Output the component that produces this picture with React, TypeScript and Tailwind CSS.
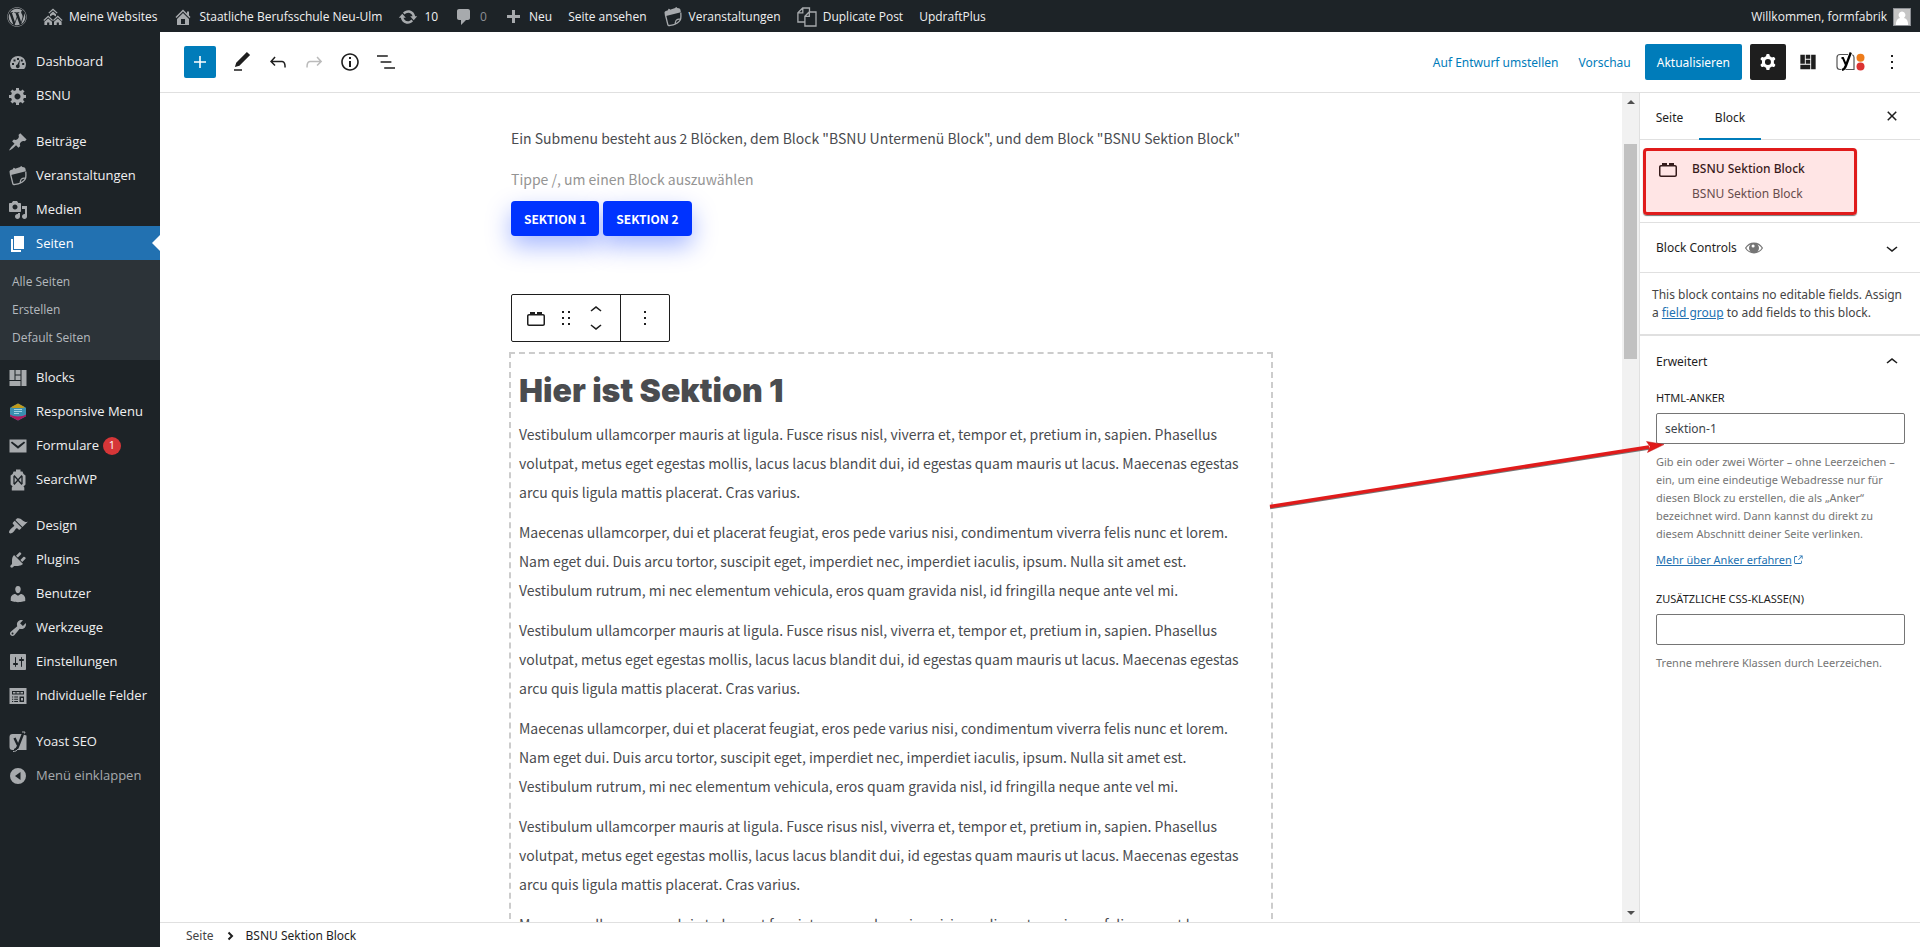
import type { ReactNode } from "react";
import { FaWordpress } from "react-icons/fa";

type IconProps = { d: string; box?: number; className?: string };

function Icon({ d, box = 20, className = "size-5" }: IconProps) {
  return (
    <svg viewBox={`0 0 ${box} ${box}`} className={`${className} shrink-0`} fill="currentColor" fillRule="evenodd" aria-hidden="true">
      <path d={d} />
    </svg>
  );
}

const dash = {
  home: "M16 8.5l1.53 1.53-1.06 1.06L10 4.6l-6.47 6.49-1.06-1.06L10 2.5l4 4v-2h2v4zm-6-2.46l6 5.99V18H4v-5.97zM12 17v-5H8v5h4z",
  update:
    "M10.2 3.28c3.53 0 6.43 2.61 6.92 6h2.08l-3.5 4-3.5-4h2.32c-.45-1.97-2.21-3.45-4.32-3.45-1.45 0-2.73.71-3.54 1.78L4.95 5.66C6.23 4.2 8.11 3.28 10.2 3.28zm-.4 13.44c-3.52 0-6.43-2.61-6.92-6H.8l3.5-4c1.17 1.33 2.33 2.67 3.5 4H5.48c.45 1.97 2.21 3.45 4.32 3.45 1.45 0 2.73-.71 3.54-1.78l1.71 1.95c-1.28 1.46-3.15 2.38-5.25 2.38z",
  comment: "M5 2h9c1.1 0 2 .9 2 2v7c0 1.1-.9 2-2 2h-2l-5 5v-5H5c-1.1 0-2-.9-2-2V4c0-1.1.9-2 2-2z",
  plus: "M17 8v3h-5v5H9v-5H4V8h5V3h3v5h5z",
  page: "M6 15V2h10v13H6zm-1 1h8v2H3V5h2v11z",
  generic:
    "M18 12h-2.18c-.17.7-.44 1.35-.81 1.93l1.54 1.54-2.1 2.1-1.54-1.54c-.58.36-1.23.63-1.91.79V19H8v-2.18c-.68-.16-1.33-.43-1.91-.79l-1.54 1.54-2.12-2.12 1.54-1.54c-.36-.58-.63-1.23-.79-1.91H1V9.03h2.17c.16-.7.44-1.35.8-1.94L2.43 5.55l2.1-2.1 1.54 1.54c.58-.37 1.24-.64 1.93-.81V2h3v2.18c.68.16 1.33.43 1.91.79l1.54-1.54 2.12 2.12-1.54 1.54c.36.59.64 1.24.8 1.94H18V12zm-8.5 1.5c1.66 0 3-1.34 3-3s-1.34-3-3-3-3 1.34-3 3 1.34 3 3 3z",
  post: "M10.44 3.02l1.82-1.82 6.36 6.35-1.83 1.82c-1.05-.68-2.48-.57-3.41.36l-.75.75c-.92.93-1.04 2.35-.35 3.41l-1.83 1.82-2.41-2.41-2.8 2.79c-.42.42-3.38 2.71-3.8 2.29s1.86-3.39 2.28-3.81l2.79-2.79L4.1 9.36l1.83-1.82c1.05.69 2.48.57 3.4-.36l.75-.75c.93-.92 1.05-2.35.36-3.41z",
  media:
    "M13 11V4c0-.55-.45-1-1-1h-1.67L9 1H5L3.67 3H2c-.55 0-1 .45-1 1v7c0 .55.45 1 1 1h10c.55 0 1-.45 1-1zM7 4.5c1.38 0 2.5 1.12 2.5 2.5S8.38 9.5 7 9.5 4.5 8.38 4.5 7 5.62 4.5 7 4.5zM14 6h5v10.5c0 1.38-1.12 2.5-2.5 2.5S14 17.88 14 16.5s1.12-2.5 2.5-2.5c.17 0 .34.02.5.05V9h-3V6zm-4 8.05V13h2v3.5c0 1.38-1.12 2.5-2.5 2.5S7 17.88 7 16.5 8.12 14 9.5 14c.17 0 .34.02.5.05z",
  appearance:
    "M14.48 11.06L7.41 3.99l1.5-1.5c.5-.56 2.3-.47 3.51.32 1.21.8 1.43 1.28 2.91 2.1 1.18.64 2.45 1.26 4.45.85zm-.71.71L6.7 4.7 4.93 6.47c-.39.39-.39 1.02 0 1.41l1.06 1.06c.39.39.39 1.03 0 1.42-.6.6-1.43 1.11-2.21 1.69-.35.26-.7.53-1.01.84C1.43 14.23.4 16.08 1.4 17.07c.99 1 2.84-.03 4.18-1.36.31-.31.58-.66.85-1.02.57-.78 1.08-1.61 1.69-2.21.39-.39 1.02-.39 1.41 0l1.06 1.06c.39.39 1.02.39 1.41 0z",
  plugins:
    "M13.11 4.36L9.87 7.6 8 5.73l3.24-3.24c.35-.34 1.05-.2 1.56.32.52.51.66 1.21.31 1.55zm-8 1.77l.91-1.12 9.01 9.01-1.19.84c-.71.71-2.63 1.16-3.82 1.16H6.14L4.9 17.26c-.59.59-1.54.59-2.12 0-.59-.58-.59-1.53 0-2.12l1.24-1.24v-3.88c0-1.13.4-3.19 1.09-3.89zm7.26 3.97l3.24-3.24c.34-.35 1.04-.21 1.55.31.52.51.66 1.21.31 1.55l-3.24 3.25z",
  users:
    "M10 9.25c-2.27 0-2.73-3.44-2.73-3.44C7 4.02 7.82 2 9.97 2c2.16 0 2.98 2.02 2.71 3.81 0 0-.41 3.44-2.68 3.44zm0 2.57L12.72 10c2.39 0 4.52 2.33 4.52 4.53v2.49s-3.65 1.13-7.24 1.13c-3.65 0-7.24-1.13-7.24-1.13v-2.49c0-2.25 1.94-4.48 4.47-4.48z",
  tools:
    "M16.68 9.77c-1.34 1.34-3.3 1.67-4.95.99l-5.41 6.52c-.99.99-2.59.99-3.58 0s-.99-2.59 0-3.57l6.52-5.42c-.68-1.65-.35-3.61.99-4.95 1.28-1.28 3.12-1.62 4.72-1.06l-2.89 2.89 2.82 2.82 2.86-2.87c.53 1.58.18 3.39-1.08 4.65zM3.81 16.21c.4.39 1.04.39 1.43 0 .4-.4.4-1.04 0-1.43-.39-.4-1.03-.4-1.43 0-.39.39-.39 1.03 0 1.43z",
  settings:
    "M18 17V3c0-.55-.45-1-1-1H3c-.55 0-1 .45-1 1v14c0 .55.45 1 1 1h14c.55 0 1-.45 1-1zM8 11h1c.55 0 1 .45 1 1s-.45 1-1 1H8v1.5c0 .28-.22.5-.5.5s-.5-.22-.5-.5V13H6c-.55 0-1-.45-1-1s.45-1 1-1h1V5.5c0-.28.22-.5.5-.5s.5.22.5.5V11zm5-2h-1c-.55 0-1-.45-1-1s.45-1 1-1h1V5.5c0-.28.22-.5.5-.5s.5.22.5.5V7h1c.55 0 1 .45 1 1s-.45 1-1 1h-1v5.5c0 .28-.22.5-.5.5s-.5-.22-.5-.5V9z",
  dashboard:
    "M3.8 17h12.4A8 8 0 1 0 3.8 17zM9 6h2v2H9zM5.5 7.5h2v2h-2zM12.8 7.5h2v2h-2zM4 11h2v2H4zM14.2 11h2v2h-2zM11.9 7.6l-.6 5.4c.3.4.4.8.4 1.2a1.9 1.9 0 1 1-2.3-1.8z",
  blocks: "M1.5 2h5v10h-5zM7.5 2h5v4.5h-5zM7.5 7.5h5V12h-5zM13.5 2h5v16h-5zM1.5 13h11v5h-11z",
  mail: "M1.5 3.5h17v13h-17zM4 5.5l-1.2 1.2L10 12.8l7.2-6.1L16 5.5l-6 4.6z",
  fields:
    "M1.5 2h17v16h-17zM4 5v3.5h12V5zM5 6h2.5v1.5H5zM8.5 6h3v1.5h-3zM12.5 6H15v1.5h-2.5zM4 10.5h1.2v1H4zM6.2 10.5H10v1H6.2zM4 12.7h1.2v1H4zM6.2 12.7H10v1H6.2zM4 14.9h1.2v1H4zM6.2 14.9H10v1H6.2zM11.5 10.5H16V16h-4.500zM13 12v2.500h2V12z",
  collapse: "M10 2a8 8 0 1 1 0 16 8 8 0 0 1 0-16zM12.500 6v8L7 10z",
  eye: "M10 3.900c4 0 7.700 2.100 9.700 5.500l.3.600-.3.600c-2 3.400-5.700 5.500-9.700 5.500S2.300 14 .3 10.600L0 10l.3-.6C2.300 6 6 3.900 10 3.900zM1.500 10c1 1.800 2.700 3.200 4.600 4A5.600 5.600 0 0 1 6.100 6c-1.900.8-3.600 2.200-4.600 4zM18.500 10c-1-1.800-2.700-3.200-4.600-4a5.600 5.600 0 0 1 0 8c1.900-.8 3.600-2.200 4.600-4zM9 6a1.700 1.700 0 1 0 0 3.400A1.700 1.700 0 0 0 9 6z",
};

const wp = {
  plus: "M18 11.2h-5.2V6h-1.6v5.2H6v1.6h5.2V18h1.6v-5.200H18z",
  edit: "M20.1 5.1L16.900 2 6.200 12.700l-1.300 4.400 4.500-1.300L20.100 5.100zM4 20.800h8v-1.500H4v1.500z",
  undo: "M18.3 11.7c-.6-.6-1.4-.9-2.3-.9H6.7l2.9-3.3-1.1-1-4.5 5L8.5 16l1-1-2.7-2.7H16c.5 0 .9.2 1.3.5 1 1 1 3.4 1 4.5v.3h1.5v-.2c0-1.500 0-4.300-1.500-5.700z",
  redo: "M15.6 6.5l-1.1 1 2.9 3.3H8c-.9 0-1.7.3-2.3.9-1.4 1.5-1.4 4.2-1.4 5.6v.2h1.5v-.3c0-1.1 0-3.5 1-4.5.3-.3.7-.5 1.3-.5h9.2L14.500 15l1.100 1.100 4.600-4.600-4.600-5z",
  info: "M12 3.200c-4.800 0-8.800 3.900-8.800 8.800 0 4.800 3.900 8.800 8.800 8.800 4.800 0 8.800-3.900 8.800-8.800 0-4.800-4-8.800-8.800-8.800zm0 16c-4 0-7.200-3.300-7.200-7.200C4.800 8 8 4.800 12 4.800s7.200 3.300 7.200 7.200c0 4-3.200 7.200-7.200 7.200zM11 17h2v-6h-2v6zm0-8h2V7h-2v2z",
  list: "M13.800 5.200H3v1.500h10.800V5.200zm-3.600 12v1.500H21v-1.500H10.200zm7.200-6H6.600v1.500h10.800v-1.500z",
  block:
    "M19 8h-1V6h-5v2h-2V6H6v2H5c-1.100 0-2 .9-2 2v8c0 1.100.9 2 2 2h14c1.100 0 2-.9 2-2v-8c0-1.100-.9-2-2-2zm.5 10c0 .3-.2.5-.5.500H5c-.3 0-.5-.2-.5-.500v-8c0-.3.2-.5.5-.5h14c.3 0 .5.200.5.500v8z",
  drag: "M5 4h2V2H5v2zm6-2v2h2V2h-2zm-6 8h2V8H5v2zm6 0h2V8h-2v2zm-6 6h2v-2H5v2zm6 0h2v-2h-2v2z",
  down: "M17.500 11.600L12 16l-5.500-4.400.9-1.200L12 14l4.500-3.600 1 1.200z",
  up: "M6.500 12.400L12 8l5.500 4.400-.9 1.200L12 10l-4.500 3.600-1-1.200z",
  more: "M13 19h-2v-2h2v2zm0-6h-2v-2h2v2zm0-6h-2V5h2v2z",
  close:
    "M12 13.060l3.712 3.713 1.061-1.060L13.061 12l3.712-3.712-1.060-1.060L12 10.938 8.288 7.227l-1.061 1.060L10.939 12l-3.712 3.712 1.060 1.061L12 13.061z",
  cog: "M10.289 4.836A1 1 0 0111.275 4h1.306a1 1 0 01.987.836l.244 1.466c.787.26 1.503.679 2.108 1.218l1.393-.522a1 1 0 011.216.437l.653 1.13a1 1 0 01-.23 1.273l-1.148.944a6.025 6.025 0 010 2.435l1.149.946a1 1 0 01.23 1.272l-.653 1.13a1 1 0 01-1.216.437l-1.394-.522c-.605.54-1.32.958-2.108 1.218l-.244 1.466a1 1 0 01-.987.836h-1.306a1 1 0 01-.986-.836l-.244-1.466a5.995 5.995 0 01-2.108-1.218l-1.394.522a1 1 0 01-1.217-.436l-.653-1.131a1 1 0 01.23-1.272l1.149-.946a6.026 6.026 0 010-2.435l-1.148-.944a1 1 0 01-.23-1.272l.653-1.131a1 1 0 011.217-.437l1.393.522a5.994 5.994 0 012.108-1.218l.244-1.466zM14.929 12a3 3 0 11-6 0 3 3 0 016 0z",
  external:
    "M18.200 17c0 .7-.6 1.200-1.200 1.200H7c-.7 0-1.200-.6-1.200-1.200V7c0-.7.6-1.200 1.200-1.200h3.200V4.200H7C5.500 4.200 4.200 5.500 4.200 7v10c0 1.500 1.200 2.800 2.800 2.800h10c1.500 0 2.800-1.200 2.800-2.800v-3.600h-1.500V17zM14.900 3v1.500h3.700l-6.400 6.400 1.100 1.100 6.400-6.400v3.700h1.500V3h-6.300z",
};

function SitesIcon() {
  return (
    <svg viewBox="0 0 20 20" className="size-5 shrink-0" fill="currentColor" fillRule="evenodd" aria-hidden="true">
      <path d="M10 1.500l4.600 4.300-.8.800L10 3.200 6.200 6.600l-.8-.8zM10 4.500l3 2.700V9.500L10 7.700 7 9.500V7.200zM5.200 8.600l4.800 4.400-.8.900-4-3.700-4 3.700-.8-.9zM14.800 8.600l4.800 4.400-.8.900-4-3.700-4 3.700-.8-.9zM5.200 11.500l3.800 3.300V18H6.300v-2.500H4.100V18H1.400v-3.200zM14.800 11.500l3.800 3.300V18h-2.700v-2.500h-2.200V18H11v-3.200z" />
    </svg>
  );
}

function EventsIcon() {
  return (
    <svg viewBox="0 0 20 20" className="size-5 shrink-0" aria-hidden="true">
      <path d="M1.500 5.800c0-1 .5-1.600 1.400-1.900l2-.6L5.500 1.700l1.200.2.300.8 5.200-1.600.8-1 1 .4.200.6 1.600.2c.9.200 1.500.8 1.700 1.700l.4 2.200L2 9.300z" fill="currentColor" />
      <path d="M2.600 8.500l2.200 9c.2.900.8 1.200 1.700 1 2-.3 4-.5 5.500-1.300 2.600-1.400 5.200-3.300 5.700-5.400.2-1.500.3-4 .1-6.200M12 17.200c.5-1.700.3-3.600 1.800-4.400 1-.5 2.500-.6 3.900-1" fill="none" stroke="currentColor" strokeWidth="1.300" />
    </svg>
  );
}

function DuplicateIcon() {
  return (
    <svg viewBox="0 0 20 20" className="size-5 shrink-0" fill="none" stroke="currentColor" strokeWidth="1.300" aria-hidden="true">
      <path d="M7.500 15H.9V5.800L5.700 1h6.800v3.500M.9 5.900h4.900V1M7.900 9.300l4.300-4.300H19v14H7.900zM7.900 9.400h4.400V5" />
    </svg>
  );
}

function ResponsiveIcon() {
  return (
    <svg viewBox="0 0 20 20" className="size-5 shrink-0" aria-hidden="true">
      <path d="M10 1.500l8 4.200v8.600l-8 4.200-8-4.200V5.700z" fill="#3a8fb0" />
      <path d="M10 1.500l7 3.700c-2 1.200-12 1.200-14 0z" fill="#c19a1b" />
      <path d="M2 12.500c3 2.600 13 2.600 16 0v1.800l-8 4.200-8-4.200z" fill="#b0195c" />
      <path d="M6 7.500h8M6 9.500h8M6 11.500h5" stroke="#9fd0e2" strokeWidth="1" />
    </svg>
  );
}

function LanternIcon() {
  return (
    <svg viewBox="0 0 20 24" className="h-6 w-5 shrink-0" aria-hidden="true">
      <path d="M8 1.500h4.500v2h2l1 2.500 2 1.500v9l-2 2 .8 1v3H3.800v-3l.8-1-2-2v-9l2-1.500 1-2.500H8z" fill="currentColor" />
      <path d="M6 7.500l8 9M14 7.500l-8 9M6 8v8M14 8v8" fill="none" stroke="#1d2327" strokeWidth="1.300" />
    </svg>
  );
}

function YoastMenuIcon() {
  return (
    <svg viewBox="0 0 20 22" className="h-[22px] w-5 shrink-0" aria-hidden="true">
      <path d="M4.500 3H16v.8L18.500 4.500V19H4.500a3 3 0 0 1-3-3V6a3 3 0 0 1 3-3z" fill="currentColor" />
      <path d="M6.500 7l3.300 7M15.500 1.500L10 15.500c-.8 2.300-2 3.500-4 3.600" fill="none" stroke="#1d2327" strokeWidth="2.400" />
      <path d="M14 1h3l-.5 1.500M5 20.500c2.500 0 3.800-.7 5-2.500" fill="none" stroke="currentColor" strokeWidth="1" />
    </svg>
  );
}

function YoastHeaderIcon() {
  return (
    <svg viewBox="0 0 30 22" className="h-[22px] w-[30px]" aria-hidden="true">
      <path d="M13 3.500H5a3 3 0 0 0-3 3v9a3 3 0 0 0 3 3h1.500M10.500 18.500H19v-12a3 3 0 0 0-1.700-2.700" fill="none" stroke="#555" strokeWidth="1.200" />
      <path d="M6.500 7h1.500l3 7" fill="none" stroke="#000" strokeWidth="2" />
      <path d="M15.800 1.500L11 14.500c-.8 2.300-1.800 4-4 4.300" fill="none" stroke="#000" strokeWidth="2.300" />
      <circle cx="25.500" cy="6.800" r="4" fill="#ee7c1b" />
      <circle cx="25.500" cy="15.500" r="4" fill="#dc3232" />
    </svg>
  );
}

type Item = { label: string; icon: ReactNode; badge?: string };

const firstItems: Item[] = [
  { label: "Dashboard", icon: <Icon d={dash.dashboard} /> },
  { label: "BSNU", icon: <Icon d={dash.generic} /> },
];
const contentItems: Item[] = [
  { label: "Beiträge", icon: <Icon d={dash.post} /> },
  { label: "Veranstaltungen", icon: <EventsIcon /> },
  { label: "Medien", icon: <Icon d={dash.media} /> },
];
const pluginItems: Item[] = [
  { label: "Blocks", icon: <Icon d={dash.blocks} /> },
  { label: "Responsive Menu", icon: <ResponsiveIcon /> },
  { label: "Formulare", icon: <Icon d={dash.mail} />, badge: "1" },
  { label: "SearchWP", icon: <LanternIcon /> },
];
const adminItems: Item[] = [
  { label: "Design", icon: <Icon d={dash.appearance} /> },
  { label: "Plugins", icon: <Icon d={dash.plugins} /> },
  { label: "Benutzer", icon: <Icon d={dash.users} /> },
  { label: "Werkzeuge", icon: <Icon d={dash.tools} /> },
  { label: "Einstellungen", icon: <Icon d={dash.settings} /> },
  { label: "Individuelle Felder", icon: <Icon d={dash.fields} /> },
];

function MenuGroup({ items }: { items: Item[] }) {
  return (
    <ul>
      {items.map((item) => (
        <li key={item.label}>
          <a href="#" className="flex h-[34px] items-center gap-2 pt-px pl-2 text-[13px] whitespace-nowrap text-[#f0f0f1]">
            <span className="text-[#a7aaad]">{item.icon}</span>
            {item.label}
            {item.badge && (
              <span className="-ml-1 flex size-[18px] items-center justify-center rounded-full bg-[#d63638] text-[11px] text-white">{item.badge}</span>
            )}
          </a>
        </li>
      ))}
    </ul>
  );
}

function AdminMenu() {
  return (
    <nav aria-label="Hauptmenü" className="flex w-40 shrink-0 flex-col gap-3 overflow-hidden bg-[#1d2327] pt-3">
      <MenuGroup items={firstItems} />
      <div>
        <MenuGroup items={contentItems} />
        <a href="#" className="relative flex h-[34px] items-center gap-2 bg-[#2271b1] pt-px pl-2 text-[13px] text-white">
          <Icon d={dash.page} />
          Seiten
          <span className="absolute top-[9px] right-0 border-8 border-l-0 border-transparent border-r-white" />
        </a>
        <ul className="flex flex-col bg-[#2c3338] pt-2 pb-2 text-xs text-[#b4b9be]">
          {["Alle Seiten", "Erstellen", "Default Seiten"].map((label) => (
            <li key={label}>
              <a href="#" className="flex h-7 items-center pl-3">
                {label}
              </a>
            </li>
          ))}
        </ul>
        <MenuGroup items={pluginItems} />
      </div>
      <MenuGroup items={adminItems} />
      <div>
        <MenuGroup items={[{ label: "Yoast SEO", icon: <YoastMenuIcon /> }]} />
        <button type="button" className="flex h-[34px] items-center gap-2 pt-px pl-2 text-[13px] text-[#a7aaad]">
          <Icon d={dash.collapse} />
          Menü einklappen
        </button>
      </div>
    </nav>
  );
}

function BarLink({ icon, children, dim = false }: { icon?: ReactNode; children?: ReactNode; dim?: boolean }) {
  return (
    <a href="#" className="flex h-8 items-center gap-[6px]">
      {icon && <span className="text-[#a7aaad]">{icon}</span>}
      {children && <span className={dim ? "text-[#8c8f94]" : ""}>{children}</span>}
    </a>
  );
}

function AdminBar() {
  return (
    <header className="flex h-8 shrink-0 items-center justify-between bg-[#1d2327] pt-px pr-[9px] pl-[7px] text-xs whitespace-nowrap text-[#f0f0f1]">
      <div className="flex items-center gap-4">
        <a href="#" aria-label="WordPress" className="text-[#a7aaad]">
          <FaWordpress className="size-5" />
        </a>
        <BarLink icon={<SitesIcon />}>Meine Websites</BarLink>
        <BarLink icon={<Icon d={dash.home} />}>Staatliche Berufsschule Neu-Ulm</BarLink>
        <BarLink icon={<Icon d={dash.update} />}>10</BarLink>
        <BarLink icon={<Icon d={dash.comment} />} dim>
          0
        </BarLink>
        <BarLink icon={<Icon d={dash.plus} />}>Neu</BarLink>
        <BarLink>Seite ansehen</BarLink>
        <BarLink icon={<EventsIcon />}>Veranstaltungen</BarLink>
        <BarLink icon={<DuplicateIcon />}>Duplicate Post</BarLink>
        <BarLink>UpdraftPlus</BarLink>
      </div>
      <a href="#" className="flex items-center gap-[6px]">
        Willkommen, formfabrik
        <svg viewBox="0 0 18 18" className="size-[18px]" aria-hidden="true">
          <path d="M0 0h18v18H0z" fill="#8c8f94" />
          <path d="M1 1h16v16H1z" fill="#c5c5c5" />
          <path d="M9 3.500a3.600 3.600 0 0 1 2 6.500c3 .8 4 3 4.200 7H2.800C3 13 4 10.800 7 10a3.600 3.600 0 0 1 2-6.500z" fill="#fff" />
        </svg>
      </a>
    </header>
  );
}

function ToolButton({ label, d, faded = false }: { label: string; d: string; faded?: boolean }) {
  return (
    <button type="button" aria-label={label} className={`flex size-9 items-center justify-center ${faded ? "text-[#bbb]" : "text-[#1e1e1e]"}`}>
      <Icon d={d} box={24} className="size-6" />
    </button>
  );
}

function EditorHeader() {
  return (
    <div className="flex h-[61px] shrink-0 items-center justify-between border-b border-[#e0e0e0] bg-white pr-[10px] pl-6 font-['Noto_Sans',sans-serif] text-xs">
      <div className="flex items-center">
        <button type="button" aria-label="Block hinzufügen" className="mr-2 flex size-8 items-center justify-center rounded-[2px] bg-[#007cba] text-white">
          <Icon d={wp.plus} box={24} className="size-6" />
        </button>
        <ToolButton label="Werkzeuge" d={wp.edit} />
        <ToolButton label="Rückgängig" d={wp.undo} />
        <ToolButton label="Wiederholen" d={wp.redo} faded />
        <ToolButton label="Details" d={wp.info} />
        <ToolButton label="Listenansicht" d={wp.list} />
      </div>
      <div className="flex items-center gap-1">
        <button type="button" className="h-9 px-2 pt-[2px] text-[#007cba]">
          Auf Entwurf umstellen
        </button>
        <button type="button" className="mr-[10px] ml-2 h-9 pt-[2px] text-[#007cba]">
          Vorschau
        </button>
        <button type="button" className="mr-1 h-9 rounded-[2px] bg-[#007cba] px-3 pt-[2px] text-white">
          Aktualisieren
        </button>
        <button type="button" aria-label="Einstellungen" className="flex size-9 items-center justify-center rounded-[2px] bg-[#1e1e1e] text-white">
          <Icon d={wp.cog} box={24} className="size-6" />
        </button>
        <button type="button" aria-label="Blocks" className="flex size-9 items-center justify-center text-[#1e1e1e]">
          <Icon d={dash.blocks} className="size-[18px]" />
        </button>
        <button type="button" aria-label="Yoast SEO" className="flex h-9 w-10 items-center justify-center">
          <YoastHeaderIcon />
        </button>
        <ToolButton label="Optionen" d={wp.more} />
      </div>
    </div>
  );
}

const vestibulum =
  "Vestibulum ullamcorper mauris at ligula. Fusce risus nisl, viverra et, tempor et, pretium in, sapien. Phasellus volutpat, metus eget egestas mollis, lacus lacus blandit dui, id egestas quam mauris ut lacus. Maecenas egestas arcu quis ligula mattis placerat. Cras varius.";
const maecenas =
  "Maecenas ullamcorper, dui et placerat feugiat, eros pede varius nisi, condimentum viverra felis nunc et lorem. Nam eget dui. Duis arcu tortor, suscipit eget, imperdiet nec, imperdiet iaculis, ipsum. Nulla sit amet est. Vestibulum rutrum, mi nec elementum vehicula, eros quam gravida nisl, id fringilla neque ante vel mi.";
const paragraphs = [vestibulum, maecenas, vestibulum, maecenas, vestibulum, maecenas];

function BlockToolbar() {
  return (
    <div role="toolbar" aria-label="Block-Werkzeuge" className="flex h-12 w-[159px] rounded-[2px] border border-[#1e1e1e] text-[#1e1e1e]">
      <div className="flex flex-1 items-center border-r border-[#1e1e1e] pl-3">
        <button type="button" aria-label="BSNU Sektion Block">
          <Icon d={wp.block} box={24} className="size-6" />
        </button>
        <button type="button" aria-label="Ziehen" className="ml-[9px]">
          <Icon d={wp.drag} box={18} className="size-[18px]" />
        </button>
        <div className="ml-[9px] flex flex-col">
          <button type="button" aria-label="Nach oben" className="flex h-4 items-center">
            <Icon d={wp.up} box={24} className="size-6" />
          </button>
          <button type="button" aria-label="Nach unten" className="flex h-4 items-center">
            <Icon d={wp.down} box={24} className="size-6" />
          </button>
        </div>
      </div>
      <button type="button" aria-label="Optionen" className="flex w-12 items-center justify-center">
        <Icon d={wp.more} box={24} className="size-6" />
      </button>
    </div>
  );
}

function Canvas() {
  return (
    <main className="min-w-0 flex-1 overflow-hidden bg-white font-['Noto_Sans_CJK_SC',sans-serif] text-sm leading-[29px] text-[#4a4c4f]">
      <div className="mx-auto max-w-[764px] pt-[31px]">
        <div className="pl-[2px]">
          <p>Ein Submenu besteht aus 2 Blöcken, dem Block "BSNU Untermenü Block", und dem Block "BSNU Sektion Block"</p>
          <p className="mt-3 text-[#949494]">Tippe /, um einen Block auszuwählen</p>
          <div className="mt-[7px] flex gap-1">
            {["SEKTION 1", "SEKTION 2"].map((label) => (
              <button
                key={label}
                type="button"
                className="h-[35px] rounded-[4px] bg-[#0033ff] px-[13px] text-xs font-bold text-white shadow-[0_10px_25px_rgba(0,51,255,0.35)]"
              >
                {label}
              </button>
            ))}
          </div>
          <div className="mt-[58px]">
            <BlockToolbar />
          </div>
        </div>
        <section className="mt-[10px] border-2 border-dashed border-[#cccccc] px-2 pt-4">
          <h2 className="font-['Inter',sans-serif] text-[32px] leading-[42px] font-black">Hier ist Sektion 1</h2>
          <div className="mt-2 flex flex-col gap-[11px] pr-3">
            {paragraphs.map((text, i) => (
              <p key={i}>{text}</p>
            ))}
          </div>
        </section>
      </div>
    </main>
  );
}

function Scrollbar() {
  return (
    <div aria-hidden="true" className="flex w-[17px] shrink-0 flex-col items-center justify-between bg-[#f1f1f1]">
      <div className="flex w-full flex-col items-center pt-[7px]">
        <span className="border-4 border-t-0 border-transparent border-b-[#505050]" />
        <span className="mt-10 h-[215px] w-[13px] bg-[#c1c1c1]" />
      </div>
      <span className="mb-[7px] border-4 border-b-0 border-transparent border-t-[#505050]" />
    </div>
  );
}

function PointerArrow() {
  return (
    <svg viewBox="0 0 396 70" className="pointer-events-none absolute top-7 -left-[387px] h-[70px] w-[396px]" aria-hidden="true">
      <path d="M1 66.500L380 7" stroke="#777" strokeWidth="3.500" />
      <path d="M1 65.500L380 6" stroke="#e01b1b" strokeWidth="3.500" />
      <path d="M395 3.500L377.500 .5 381 5.500 378.500 11.500z" fill="#e01b1b" stroke="#c01818" strokeWidth=".5" />
    </svg>
  );
}

function TextField({ id, label, value, children }: { id: string; label: string; value: string; children?: ReactNode }) {
  return (
    <div className="flex flex-col">
      <label htmlFor={id} className="text-[11px] leading-4 text-[#1e1e1e] uppercase">
        {label}
      </label>
      <div className="relative mt-[7px]">
        <input id={id} defaultValue={value} className="h-[31px] w-full rounded-[2px] border border-[#757575] bg-white px-2 text-xs text-[#3c434a]" />
        {children}
      </div>
    </div>
  );
}

function SettingsPanel() {
  return (
    <aside className="relative z-10 w-[281px] shrink-0 border-l border-[#e0e0e0] font-['Noto_Sans',sans-serif] text-xs text-[#1e1e1e]">
      <div className="flex h-[47px] items-stretch justify-between border-b border-[#e0e0e0] pr-[10px]">
        <div role="tablist" className="flex">
          <button type="button" role="tab" aria-selected="false" className="w-[59px] pt-1">
            Seite
          </button>
          <button type="button" role="tab" aria-selected="true" className="-mb-px w-[62px] border-b-2 border-[#007cba] pt-1">
            Block
          </button>
        </div>
        <div className="flex items-center">
          <ToolButton label="Schließen" d={wp.close} />
        </div>
      </div>
      <div className="relative flex h-[83px] gap-3 border-b border-[#e0e0e0] pt-[17px] pl-4">
        <Icon d={wp.block} box={24} className="size-6" />
        <div className="flex flex-col gap-[7px] pt-[3px] leading-[18px]">
          <h2 className="font-medium">BSNU Sektion Block</h2>
          <p className="text-[#555]">BSNU Sektion Block</p>
        </div>
        <span className="absolute top-2 left-[3px] h-[67px] w-[214px] rounded-[4px] border-3 border-[#e01b1b] bg-[#ff0000]/10 shadow-[0_1px_1px_#777]" />
      </div>
      <button type="button" className="flex h-[50px] w-full items-center border-b border-[#e0e0e0] px-4 pt-px">
        Block Controls
        <span className="ml-2 text-[#757575]">
          <Icon d={dash.eye} className="size-[18px]" />
        </span>
        <span className="ml-auto">
          <Icon d={wp.down} box={24} className="size-6" />
        </span>
      </button>
      <p className="border-b-2 border-[#e0e0e0] px-3 pt-[13px] pb-3 leading-[18px] text-[#444]">
        This block contains no editable fields. Assign a{" "}
        <a href="#" className="text-[#2271b1] underline">
          field group
        </a>{" "}
        to add fields to this block.
      </p>
      <button type="button" className="flex h-[52px] w-full items-center justify-between px-4">
        Erweitert
        <Icon d={wp.up} box={24} className="size-6" />
      </button>
      <div className="pt-[2px] pr-[15px] pl-4">
        <TextField id="html-anchor" label="HTML-Anker" value="sektion-1">
          <PointerArrow />
        </TextField>
        <p className="mt-[9px] text-[11px] leading-[18px] text-[#757575]">
          Gib ein oder zwei Wörter – ohne Leerzeichen – ein, um eine eindeutige Webadresse nur für diesen Block zu erstellen, die als „Anker“ bezeichnet wird. Dann kannst du
          direkt zu diesem Abschnitt deiner Seite verlinken.
        </p>
        <a href="#" className="mt-2 mb-[22px] flex items-center text-[11px] leading-[18px] text-[#2271b1] underline">
          Mehr über Anker erfahren
          <Icon d={wp.external} box={24} className="size-3" />
        </a>
        <TextField id="css-classes" label="Zusätzliche CSS-Klasse(n)" value="" />
        <p className="mt-[9px] text-[11px] leading-[18px] text-[#757575]">Trenne mehrere Klassen durch Leerzeichen.</p>
      </div>
    </aside>
  );
}

export default function App() {
  return (
    <div className="flex h-screen flex-col overflow-hidden bg-white font-['Open_Sans','Noto_Sans',sans-serif]">
      <AdminBar />
      <div className="flex min-h-0 flex-1">
        <AdminMenu />
        <div className="flex min-w-0 flex-1 flex-col">
          <EditorHeader />
          <div className="flex min-h-0 flex-1">
            <Canvas />
            <Scrollbar />
            <SettingsPanel />
          </div>
          <footer className="flex h-[25px] shrink-0 items-center gap-1 border-t border-[#e0e0e0] pt-px pl-[26px] font-['Noto_Sans',sans-serif] text-xs text-[#1e1e1e]">
            <a href="#" className="text-[#444]">
              Seite
            </a>
            <svg viewBox="0 0 24 24" className="size-6" fill="none" stroke="currentColor" strokeWidth="2" aria-hidden="true">
              <path d="M10.500 8.500l3.500 3.500-3.500 3.500" />
            </svg>
            <span>BSNU Sektion Block</span>
          </footer>
        </div>
      </div>
    </div>
  );
}
